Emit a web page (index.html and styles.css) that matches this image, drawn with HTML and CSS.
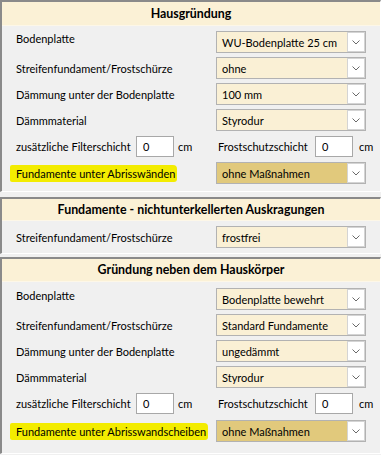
FILE: index.html
```html
<!DOCTYPE html>
<html lang="de">
<head>
<meta charset="utf-8">
<title>Gründung</title>
<link rel="stylesheet" href="styles.css">
</head>
<body>
<section class="group g1">
  <div class="group-head">Hausgründung</div>
  <div class="group-body">
    <div class="row"><span class="lbl lbl-top">Bodenplatte</span><div class="combo"><span class="combo-val">WU-Bodenplatte 25 cm</span><span class="combo-btn"><svg width="8" height="5" viewBox="0 0 8 5"><polyline points="0.5,0.5 4,4 7.5,0.5" fill="none" stroke="#6a6a6a" stroke-width="1"/></svg></span></div></div>
    <div class="row"><span class="lbl">Streifenfundament/Frostschürze</span><div class="combo"><span class="combo-val">ohne</span><span class="combo-btn"><svg width="8" height="5" viewBox="0 0 8 5"><polyline points="0.5,0.5 4,4 7.5,0.5" fill="none" stroke="#6a6a6a" stroke-width="1"/></svg></span></div></div>
    <div class="row"><span class="lbl">Dämmung unter der Bodenplatte</span><div class="combo"><span class="combo-val">100 mm</span><span class="combo-btn"><svg width="8" height="5" viewBox="0 0 8 5"><polyline points="0.5,0.5 4,4 7.5,0.5" fill="none" stroke="#6a6a6a" stroke-width="1"/></svg></span></div></div>
    <div class="row"><span class="lbl">Dämmmaterial</span><div class="combo"><span class="combo-val">Styrodur</span><span class="combo-btn"><svg width="8" height="5" viewBox="0 0 8 5"><polyline points="0.5,0.5 4,4 7.5,0.5" fill="none" stroke="#6a6a6a" stroke-width="1"/></svg></span></div></div>
    <div class="row">
      <div class="pair"><span class="lbl lbl-filter">zusätzliche Filterschicht</span><span class="num">0</span><span class="unit">cm</span></div>
      <div class="pair pair-right"><span class="lbl lbl-frost">Frostschutzschicht</span><span class="num">0</span><span class="unit unit-right">cm</span></div>
    </div>
    <div class="row row-last"><span class="lbl"><mark class="hl">Fundamente unter Abrisswänden</mark></span><div class="combo combo-alt"><span class="combo-val">ohne Maßnahmen</span><span class="combo-btn"><svg width="8" height="5" viewBox="0 0 8 5"><polyline points="0.5,0.5 4,4 7.5,0.5" fill="none" stroke="#6a6a6a" stroke-width="1"/></svg></span></div></div>
  </div>
</section>

<section class="group g2">
  <div class="group-head">Fundamente - nichtunterkellerten Auskragungen</div>
  <div class="group-body">
    <div class="row"><span class="lbl">Streifenfundament/Frostschürze</span><div class="combo"><span class="combo-val">frostfrei</span><span class="combo-btn"><svg width="8" height="5" viewBox="0 0 8 5"><polyline points="0.5,0.5 4,4 7.5,0.5" fill="none" stroke="#6a6a6a" stroke-width="1"/></svg></span></div></div>
  </div>
</section>

<section class="group g3">
  <div class="group-head">Gründung neben dem Hauskörper</div>
  <div class="group-body">
    <div class="row"><span class="lbl lbl-top">Bodenplatte</span><div class="combo"><span class="combo-val">Bodenplatte bewehrt</span><span class="combo-btn"><svg width="8" height="5" viewBox="0 0 8 5"><polyline points="0.5,0.5 4,4 7.5,0.5" fill="none" stroke="#6a6a6a" stroke-width="1"/></svg></span></div></div>
    <div class="row"><span class="lbl">Streifenfundament/Frostschürze</span><div class="combo"><span class="combo-val">Standard Fundamente</span><span class="combo-btn"><svg width="8" height="5" viewBox="0 0 8 5"><polyline points="0.5,0.5 4,4 7.5,0.5" fill="none" stroke="#6a6a6a" stroke-width="1"/></svg></span></div></div>
    <div class="row"><span class="lbl">Dämmung unter der Bodenplatte</span><div class="combo"><span class="combo-val">ungedämmt</span><span class="combo-btn"><svg width="8" height="5" viewBox="0 0 8 5"><polyline points="0.5,0.5 4,4 7.5,0.5" fill="none" stroke="#6a6a6a" stroke-width="1"/></svg></span></div></div>
    <div class="row"><span class="lbl">Dämmmaterial</span><div class="combo"><span class="combo-val">Styrodur</span><span class="combo-btn"><svg width="8" height="5" viewBox="0 0 8 5"><polyline points="0.5,0.5 4,4 7.5,0.5" fill="none" stroke="#6a6a6a" stroke-width="1"/></svg></span></div></div>
    <div class="row">
      <div class="pair"><span class="lbl lbl-filter">zusätzliche Filterschicht</span><span class="num">0</span><span class="unit">cm</span></div>
      <div class="pair pair-right"><span class="lbl lbl-frost">Frostschutzschicht</span><span class="num">0</span><span class="unit unit-right">cm</span></div>
    </div>
    <div class="row row-last"><span class="lbl"><mark class="hl">Fundamente unter Abrisswandscheiben</mark></span><div class="combo combo-alt"><span class="combo-val">ohne Maßnahmen</span><span class="combo-btn"><svg width="8" height="5" viewBox="0 0 8 5"><polyline points="0.5,0.5 4,4 7.5,0.5" fill="none" stroke="#6a6a6a" stroke-width="1"/></svg></span></div></div>
  </div>
</section>
</body>
</html>
```
FILE: styles.css
```css
html, body {
  margin: 0;
  padding: 0;
  background: #f0f0f0;
}
body {
  width: 381px;
  height: 455px;
  overflow: hidden;
  font-family: Lato, "Liberation Sans", sans-serif;
  font-size: 11px;
  color: #000;
}
.group {
  box-sizing: border-box;
  width: 381px;
  border-top: 2px solid #8a8a8a;
  border-left: 2px solid #8a8a8a;
  border-right: 1px solid #ffffff;
  border-bottom: 1px solid #ffffff;
  background: #f0f0f0;
}
.g1 { margin-bottom: 5px; }
.g2 { margin-bottom: 3px; }
.group-head {
  height: 24px;
  line-height: 23px;
  background: #fbf1d6;
  border-bottom: 1px solid #fdf7e8;
  box-sizing: border-box;
  text-align: center;
  font-weight: bold;
  font-size: 12.4px;
}
.g2 .group-head { height: 22px; line-height: 21px; }
.g3 .group-head { height: 23px; line-height: 22px; }
.group-body {
  padding: 3px 14px 5px 14px;
}
.g2 .group-body { padding-bottom: 3px; }
.g3 .group-body { padding-top: 4px; padding-bottom: 9px; }
.row {
  display: grid;
  grid-template-columns: minmax(0, 1fr) 150px;
  align-items: center;
  height: 26px;
}
.g1 .row-last { margin-top: 1px; }
.g3 .row-last { margin-top: 2px; }
.lbl {
  white-space: nowrap;
}
.lbl-top {
  margin-bottom: 7px;
}
.combo {
  box-sizing: border-box;
  height: 22px;
  border: 1px solid #b2b2b2;
  background: #faf0d5;
  display: flex;
  align-items: center;
  justify-content: space-between;
}
.combo-alt {
  background: #e1c97c;
}
.combo-val {
  padding-left: 5px;
  white-space: nowrap;
}
.combo-btn {
  box-sizing: border-box;
  flex: none;
  width: 18px;
  height: 20px;
  background: #ffffff;
  border: 1px solid #d4d4d4;
  display: flex;
  align-items: center;
  justify-content: center;
}
.pair {
  display: flex;
  align-items: center;
  min-width: 0;
}
.pair-right {
  width: 150px;
}
.lbl-filter {
  width: 120px;
  flex: none;
}
.lbl-frost {
  width: 97px;
  margin-left: 2px;
  flex: none;
}
.num {
  box-sizing: border-box;
  flex: none;
  width: 38px;
  height: 21px;
  line-height: 19px;
  padding-left: 6px;
  background: #ffffff;
  border: 1px solid #a8a8a8;
}
.unit {
  flex: none;
  margin-left: 4px;
}
.unit-right {
  margin-left: 6px;
}
.hl {
  background: #f3ec00;
  color: #000;
  padding: 2px 2px 2px 6px;
  margin-left: -6px;
  border-radius: 2px 4px 3px 2px;
}
```
